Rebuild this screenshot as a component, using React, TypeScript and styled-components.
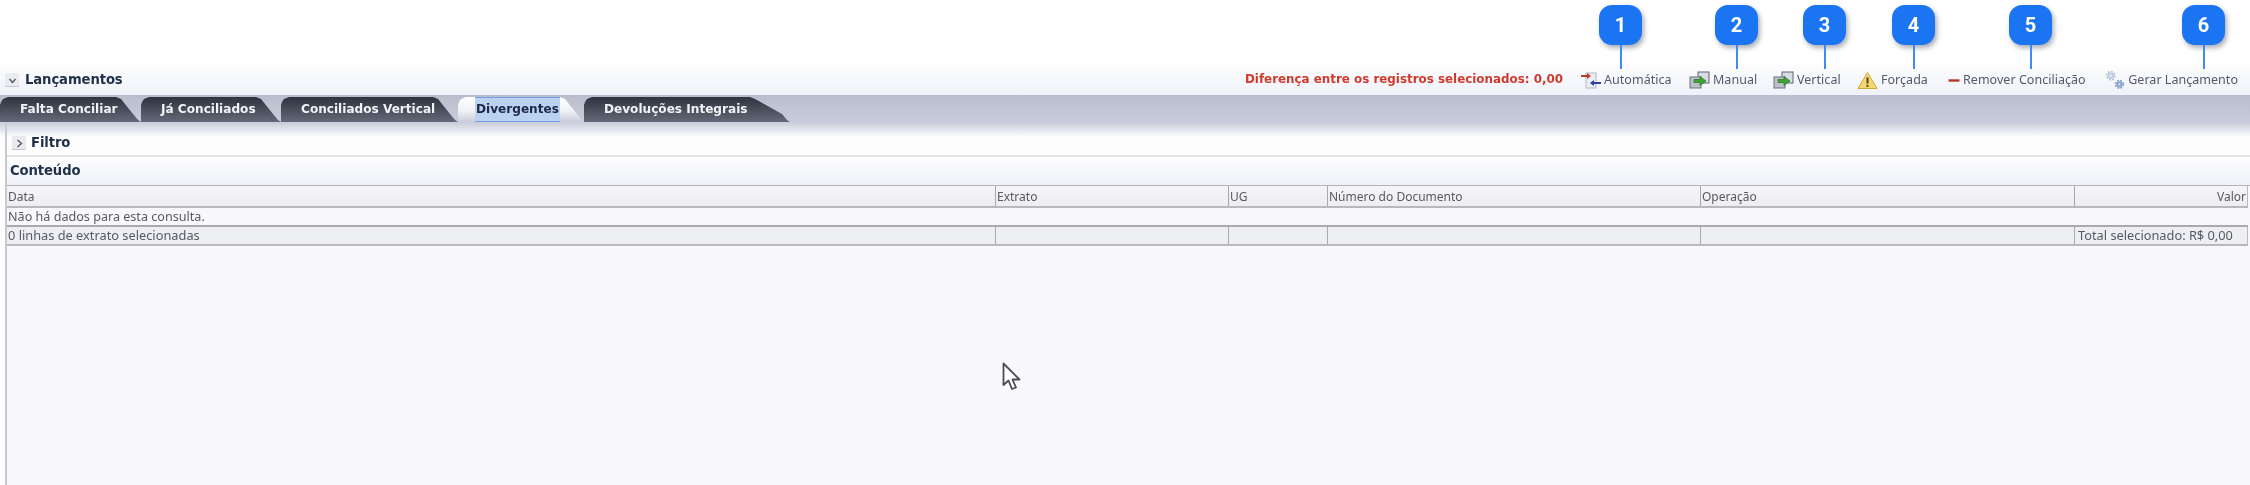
import React from "react";
import styled, { createGlobalStyle } from "styled-components";

const Global = createGlobalStyle`
  html, body { margin: 0; padding: 0; background: #fff; }
  body { width: 2250px; height: 485px; overflow: hidden; font-family: "Noto Sans", "DejaVu Sans", sans-serif; }
`;

const Page = styled.div`
  position: relative;
  width: 2250px;
  height: 485px;
  overflow: hidden;
  background: #fff;
`;

const CalloutStrip = styled.div`
  height: 65px;
`;

const Callout = styled.div<{ $left: number }>`
  position: absolute;
  z-index: 3;
  top: 5px;
  left: ${(p) => p.$left}px;
  width: 43px;
  height: 40px;
  border-radius: 13px;
  background: #1b74f1;
  box-shadow: 2px 3px 5px rgba(40, 50, 70, 0.4);
  color: #fff;
  font: 700 20px/40px "Roboto", "Liberation Sans", sans-serif;
  text-align: center;
  filter: blur(0.3px);
  &::after {
    content: "";
    position: absolute;
    left: 21px;
    top: 40px;
    width: 2px;
    height: 24px;
    background: #3d8cf2;
  }
`;

const Shell = styled.div`
  filter: blur(0.6px);
`;

const HeaderBar = styled.header`
  height: 30px;
  display: flex;
  align-items: center;
  padding: 0 12px 0 5px;
  background: linear-gradient(#fdfdfe, #eff2f9);
`;

const Disclosure = styled.span`
  width: 14px;
  height: 14px;
  border-radius: 2px;
  background: #e9ebf0;
  box-shadow: inset 0 -1px 0 #c2c5ce;
  display: inline-flex;
  align-items: center;
  justify-content: center;
  flex: none;
`;

const PanelTitle = styled.h2`
  margin: 0 0 0 6px;
  font: 700 13.2px/1 "DejaVu Sans", sans-serif;
  color: #1f3049;
  letter-spacing: -0.1px;
`;

const Actions = styled.div`
  margin-left: auto;
  display: flex;
  align-items: center;
`;

const Difference = styled.span`
  font: 700 11.9px/1 "DejaVu Sans", sans-serif;
  color: #cf3a2c;
  margin-right: 18px;
  white-space: nowrap;
`;

const Action = styled.span<{ $width: number }>`
  display: inline-flex;
  align-items: center;
  gap: 3px;
  width: ${(p) => p.$width}px;
  font: 400 12.5px/1 "Noto Sans", sans-serif;
  color: #525a6b;
  white-space: nowrap;
  letter-spacing: 0.03px;
`;

const TabBand = styled.nav`
  height: 27px;
  display: flex;
  align-items: flex-end;
  background: linear-gradient(#b9bdcd, #c8ccda);
`;

const Tab = styled.span<{ $width: number; $active?: boolean; $slope?: number }>`
  width: ${(p) => p.$width}px;
  height: 25px;
  margin-right: ${(p) => (p.$active ? "-1px" : "0")};
  padding-left: 20px;
  box-sizing: border-box;
  display: flex;
  align-items: center;
  font: 700 12.1px/1 "DejaVu Sans", sans-serif;
  color: ${(p) => (p.$active ? "#1d2748" : "#f2f3f6")};
  background: ${(p) =>
    p.$active ? "linear-gradient(#ffffff, #f1f2f5 55%, #c8ccda)" : "linear-gradient(#2e333f, #646979)"};
  clip-path: polygon(
    0 100%,
    0 8px,
    1px 5px,
    3px 2px,
    8px 0,
    calc(100% - ${(p) => p.$slope ?? 25}px) 0,
    calc(100% - ${(p) => (p.$slope ?? 25) - 5}px) 2px,
    calc(100% - 8px) 17px,
    calc(100% - 3px) 23px,
    100% 25px
  );
`;

const Focused = styled.span`
  height: 23px;
  display: inline-flex;
  align-items: center;
  padding: 0 1px;
  margin-left: -3px;
  background: #bcd2f3;
  border-top: 1px solid #6fa0e8;
  border-bottom: 1px solid #6fa0e8;
`;

const Fade = styled.div`
  height: 15px;
  margin-bottom: -15px;
  background: linear-gradient(#c8ccda, rgba(255, 255, 255, 0));
  position: relative;
  z-index: 1;
`;

const Body = styled.main`
  margin-left: 5px;
  border-left: 2px solid #c9c9cd;
  height: 363px;
  background: #f9f9fb;
  display: flex;
  flex-direction: column;
`;

const FilterRow = styled.div`
  height: 35px;
  box-sizing: border-box;
  padding: 9px 0 0 5px;
  display: flex;
  align-items: center;
  background: #fdfdfe;
  border-bottom: 2px solid #e2e2e5;
`;

const FilterTitle = styled(PanelTitle)`
  margin-left: 5px;
`;

const ContentRow = styled.div`
  height: 29px;
  box-sizing: border-box;
  padding-left: 3px;
  display: flex;
  align-items: center;
  background: linear-gradient(#fdfdfe, #eef1f8);
  border-bottom: 1px solid #b4b4b8;
`;

const ContentTitle = styled(PanelTitle)`
  margin: 0;
`;

const Row = styled.div<{ $tone: "head" | "foot" }>`
  width: 2241px;
  display: grid;
  grid-template-columns: 988px 233px 99px 373px 374px 174px;
  height: ${(p) => (p.$tone === "head" ? 22 : 19)}px;
  box-sizing: border-box;
  background: ${(p) => (p.$tone === "head" ? "linear-gradient(#f5f5f7, #eeeef1)" : "#eeeff2")};
  border-bottom: 2px solid #b9b9bd;
  border-right: 1px solid #b9b9bd;
`;

const Cell = styled.div<{ $end?: boolean }>`
  font: 400 12px/21px "Noto Sans", sans-serif;
  color: #565a62;
  padding: 0 2px 0 1px;
  text-align: ${(p) => (p.$end ? "right" : "left")};
  border-left: 1px solid #a9a9ae;
  white-space: nowrap;
  overflow: hidden;
  &:first-child { border-left: 0; }
`;

const FootCell = styled(Cell)<{ $pad?: number }>`
  font-size: 12.8px;
  line-height: 17px;
  padding-left: ${(p) => p.$pad ?? 1}px;
`;

const EmptyRow = styled.div`
  height: 19px;
  box-sizing: border-box;
  width: 2241px;
  font: 400 12.6px/17px "Noto Sans", sans-serif;
  color: #565a62;
  padding-left: 1px;
  background: #f9f9fb;
  border-bottom: 2px solid #a9a9ae;
`;

const Pointer = styled.svg`
  position: absolute;
  left: 1001px;
  top: 361px;
  z-index: 2;
`;

const Chevron = ({ dir }: { dir: "down" | "right" }) => (
  <svg width="9" height="9" viewBox="0 0 9 9">
    <path
      d={dir === "down" ? "M1.5 3L4.5 6.5L7.5 3" : "M2.5 1L6.5 4.5L2.5 8"}
      fill="none"
      stroke="#4a5060"
      strokeWidth="1.2"
    />
  </svg>
);

const AutoIcon = () => (
  <svg width="20" height="20" viewBox="0 0 20 20">
    <rect x="5" y="3" width="10" height="15" fill="#eceef2" stroke="#b4b8c2" />
    <path d="M0 6H8" stroke="#c0392b" strokeWidth="2" />
    <path d="M6 3L10 6L6 9Z" fill="#c0392b" />
    <path d="M10 13H20" stroke="#2b3f9e" strokeWidth="2" />
    <path d="M13 10L9 13L13 16Z" fill="#2b3f9e" />
  </svg>
);

const StackIcon = () => (
  <svg width="21" height="20" viewBox="0 0 21 20">
    <rect x="9" y="2" width="11" height="11" fill="#d8dbe3" stroke="#5e6472" />
    <rect x="1" y="7" width="11" height="11" fill="#bcc0cb" stroke="#6d7280" />
    <path d="M5 9.5H11V6.5L17 11L11 15.5V12.5H5Z" fill="#3fa535" stroke="#24751f" strokeWidth="0.7" />
  </svg>
);

const WarnIcon = () => (
  <svg width="21" height="20" viewBox="0 0 21 20">
    <path d="M10.5 2.5L20 18.5H1Z" fill="#f5d76e" stroke="#c9a93f" strokeLinejoin="round" />
    <path d="M10.5 7.5V13.5" stroke="#4e4020" strokeWidth="2" />
    <rect x="9.5" y="14.8" width="2" height="2" fill="#4e4020" />
  </svg>
);

const DashIcon = () => (
  <svg width="12" height="20" viewBox="0 0 12 20">
    <path d="M0.5 10.5H11.5" stroke="#b5352a" strokeWidth="2.4" />
  </svg>
);

const GearIcon = () => (
  <svg width="21" height="22" viewBox="0 0 21 22">
    <circle cx="6" cy="6.5" r="3.6" fill="#c3cfe0" />
    <circle cx="6" cy="6.5" r="4.4" fill="none" stroke="#b4c2d8" strokeWidth="1.6" strokeDasharray="1.8 1.6" />
    <circle cx="6" cy="6.5" r="1.2" fill="#eef1f7" />
    <circle cx="15" cy="15.5" r="3.2" fill="#8aa5cc" />
    <circle cx="15" cy="15.5" r="4" fill="none" stroke="#7d9ac5" strokeWidth="1.6" strokeDasharray="1.8 1.4" />
    <circle cx="15" cy="15.5" r="1.1" fill="#e6ebf4" />
  </svg>
);

const callouts = [
  { n: 1, left: 1599 },
  { n: 2, left: 1715 },
  { n: 3, left: 1803 },
  { n: 4, left: 1892 },
  { n: 5, left: 2009 },
  { n: 6, left: 2182 },
];

const tabs = [
  { label: "Falta Conciliar", width: 141 },
  { label: "Já Conciliados", width: 140 },
  { label: "Conciliados Vertical", width: 177 },
];

export default function App() {
  return (
    <Page>
      <Global />
      {callouts.map((c) => (
        <Callout key={c.n} $left={c.left}>
          {c.n}
        </Callout>
      ))}
      <CalloutStrip />
      <Shell>
        <HeaderBar>
          <Disclosure>
            <Chevron dir="down" />
          </Disclosure>
          <PanelTitle>Lançamentos</PanelTitle>
          <Actions>
            <Difference>Diferença entre os registros selecionados: 0,00</Difference>
            <Action $width={108}>
              <AutoIcon />
              Automática
            </Action>
            <Action $width={84}>
              <StackIcon />
              Manual
            </Action>
            <Action $width={84}>
              <StackIcon />
              Vertical
            </Action>
            <Action $width={91}>
              <WarnIcon />
              Forçada
            </Action>
            <Action $width={157}>
              <DashIcon />
              Remover Conciliação
            </Action>
            <Action $width={133}>
              <GearIcon />
              Gerar Lançamento
            </Action>
          </Actions>
        </HeaderBar>
        <TabBand>
          {tabs.map((t) => (
            <Tab key={t.label} $width={t.width}>
              {t.label}
            </Tab>
          ))}
          <Tab $width={127} $active>
            <Focused>Divergentes</Focused>
          </Tab>
          <Tab $width={206} $slope={40}>
            Devoluções Integrais
          </Tab>
        </TabBand>
        <Fade />
        <Body>
          <FilterRow>
            <Disclosure>
              <Chevron dir="right" />
            </Disclosure>
            <FilterTitle>Filtro</FilterTitle>
          </FilterRow>
          <ContentRow>
            <ContentTitle>Conteúdo</ContentTitle>
          </ContentRow>
          <Row $tone="head">
            <Cell>Data</Cell>
            <Cell>Extrato</Cell>
            <Cell>UG</Cell>
            <Cell>Número do Documento</Cell>
            <Cell>Operação</Cell>
            <Cell $end>Valor</Cell>
          </Row>
          <EmptyRow>Não há dados para esta consulta.</EmptyRow>
          <Row $tone="foot">
            <FootCell>0 linhas de extrato selecionadas</FootCell>
            <Cell />
            <Cell />
            <Cell />
            <Cell />
            <FootCell $pad={3}>Total selecionado: R$ 0,00</FootCell>
          </Row>
        </Body>
      </Shell>
      <Pointer width="22" height="32" viewBox="0 0 22 32">
        <path
          d="M2.5 2.5V24L7.5 19.5L11 28L15 26.5L11.5 18.5H18.5Z"
          fill="#fff"
          stroke="#4a4d55"
          strokeWidth="1.8"
          strokeLinejoin="round"
        />
      </Pointer>
    </Page>
  );
}
